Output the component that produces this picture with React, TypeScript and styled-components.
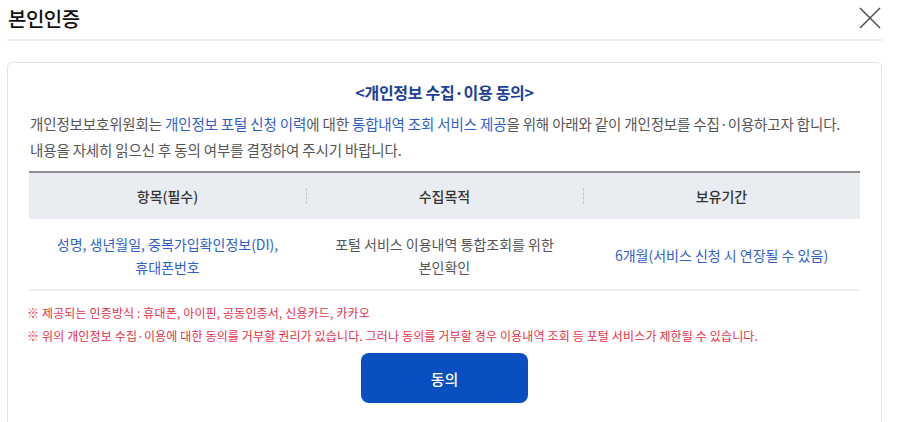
import React from 'react';
import styled, { createGlobalStyle } from 'styled-components';

const GlobalStyle = createGlobalStyle`
  html, body {
    margin: 0;
    padding: 0;
    background: #ffffff;
  }
  body {
    font-family: "Noto Sans CJK KR", "Noto Sans", sans-serif;
    color: #333;
  }
`;

const Modal = styled.div`
  width: 900px;
  height: 422px;
  box-sizing: border-box;
  padding: 0 18px 0 7px;
  overflow: hidden;
`;

const Header = styled.div`
  display: flex;
  align-items: center;
  justify-content: space-between;
  height: 39px;
  border-bottom: 2px solid #ececec;
  padding-left: 1px;
`;

const Title = styled.h1`
  margin: 0;
  font-size: 20px;
  font-weight: 500;
  color: #111;
  letter-spacing: -0.5px;
  line-height: 1;
  margin-top: -2px;
`;

const CloseButton = styled.button`
  border: 0;
  background: none;
  padding: 0;
  width: 22px;
  height: 22px;
  margin-right: 1px;
  margin-top: -3px;
  cursor: pointer;
  display: flex;
`;

const Card = styled.section`
  margin-top: 21px;
  height: 380px;
  border: 1px solid #e4e4e4;
  border-radius: 5px;
  box-sizing: border-box;
  padding: 16px 21px 0 21px;
`;

const ConsentTitle = styled.h2`
  margin: 0;
  text-align: center;
  font-size: 16px;
  font-weight: 700;
  color: #1b3f99;
  letter-spacing: -0.3px;
  line-height: 26px;
`;

const Intro = styled.p`
  margin: 6px 0 0 1px;
  font-size: 14.5px;
  line-height: 26px;
  color: #555;
  letter-spacing: -0.15px;
`;

const Hl = styled.span`
  color: #3160cc;
`;

const Table = styled.div`
  margin-top: 8px;
  border-top: 2px solid #8f8f8f;
  border-bottom: 2px solid #efefef;
`;

const Row = styled.div<{ $head?: boolean }>`
  display: grid;
  grid-template-columns: repeat(3, 1fr);
  align-items: center;
  height: ${p => (p.$head ? '46px' : '70px')};
  background: ${p => (p.$head ? '#e9edf1' : '#fff')};
`;

const Cell = styled.div<{ $head?: boolean; $tone?: 'blue' | 'gray' }>`
  position: relative;
  text-align: center;
  font-size: 14px;
  font-weight: ${p => (p.$head ? 500 : 400)};
  line-height: 23px;
  letter-spacing: 0;
  color: ${p => (p.$head ? '#333' : p.$tone === 'blue' ? '#3160cc' : '#555')};
  padding: ${p => (p.$head ? '0 10px' : '3px 10px 0')};

  & + &::before {
    content: ${p => (p.$head ? "''" : 'none')};
    position: absolute;
    left: 0;
    top: 50%;
    height: 16px;
    margin-top: -8px;
    border-left: 1px dashed #c4c8cc;
  }
`;

const Notes = styled.ul`
  list-style: none;
  margin: 10px 0 0 -2px;
  padding: 0;
`;

const Note = styled.li`
  font-size: 12px;
  line-height: 23px;
  color: #e5324b;
  letter-spacing: 0.14px;
`;

const Actions = styled.div`
  display: flex;
  justify-content: center;
  margin-top: 6px;
`;

const AgreeButton = styled.button`
  width: 167px;
  height: 50px;
  border: 0;
  border-radius: 8px;
  background: #0a4fc2;
  color: #fff;
  font-family: inherit;
  font-size: 15px;
  font-weight: 500;
  cursor: pointer;
`;

export default function App() {
  return (
    <>
      <GlobalStyle />
      <Modal>
        <Header>
          <Title>본인인증</Title>
          <CloseButton aria-label="닫기">
            <svg width="22" height="22" viewBox="0 0 22 22">
              <path d="M1 1 L21 21 M21 1 L1 21" stroke="#555" strokeWidth="1.6" fill="none" />
            </svg>
          </CloseButton>
        </Header>
        <Card>
          <ConsentTitle>&lt;개인정보 수집·이용 동의&gt;</ConsentTitle>
          <Intro>
            개인정보보호위원회는 <Hl>개인정보 포털 신청 이력</Hl>에 대한 <Hl>통합내역 조회 서비스 제공</Hl>을 위해
            아래와 같이 개인정보를 수집·이용하고자 합니다.
            <br />
            내용을 자세히 읽으신 후 동의 여부를 결정하여 주시기 바랍니다.
          </Intro>
          <Table>
            <Row $head>
              <Cell $head>항목(필수)</Cell>
              <Cell $head>수집목적</Cell>
              <Cell $head>보유기간</Cell>
            </Row>
            <Row>
              <Cell $tone="blue">
                성명, 생년월일, 중복가입확인정보(DI),
                <br />
                휴대폰번호
              </Cell>
              <Cell $tone="gray">
                포털 서비스 이용내역 통합조회를 위한
                <br />
                본인확인
              </Cell>
              <Cell $tone="blue">6개월(서비스 신청 시 연장될 수 있음)</Cell>
            </Row>
          </Table>
          <Notes>
            <Note>※ 제공되는 인증방식 : 휴대폰, 아이핀, 공동인증서, 신용카드, 카카오</Note>
            <Note>
              ※ 위의 개인정보 수집·이용에 대한 동의를 거부할 권리가 있습니다. 그러나 동의를 거부할 경우 이용내역 조회 등
              포털 서비스가 제한될 수 있습니다.
            </Note>
          </Notes>
          <Actions>
            <AgreeButton>동의</AgreeButton>
          </Actions>
        </Card>
      </Modal>
    </>
  );
}
